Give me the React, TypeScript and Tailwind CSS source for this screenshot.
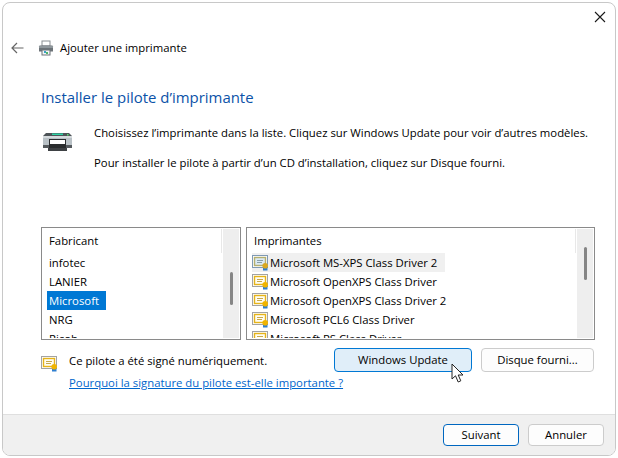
function PrinterSmall() {
  return (
    <svg width="16" height="16" viewBox="0 0 16 16" className="shrink-0">
      <rect x="4" y="1" width="8" height="5" fill="#fff" stroke="#8a8f94" />
      <path d="M1 6.5 Q1 5.5 2 5.5 H14 Q15 5.5 15 6.5 V11.5 H1 Z" fill="#6c7378" />
      <rect x="1" y="6" width="14" height="2" fill="#8f979c" />
      <rect x="4" y="10" width="8" height="5" fill="#f4f6f7" stroke="#6c7378" />
      <rect x="6" y="11" width="2" height="2" fill="#3aa0c8" />
      <rect x="8" y="12" width="2" height="2" fill="#52b66a" />
    </svg>
  );
}
function PrinterBig() {
  return (
    <svg width="29" height="18" viewBox="0 0 29 18" className="shrink-0">
      <path d="M3 0 H26 L29 3 H0 Z" fill="#4d5357" />
      <rect x="9" y="0.5" width="11" height="1.5" fill="#2ed3a6" />
      <rect x="24" y="1" width="1.5" height="1.5" fill="#58e070" />
      <rect x="0" y="3" width="29" height="11" fill="#b9c1c6" />
      <rect x="0" y="3" width="29" height="2" fill="#d5dadd" />
      <rect x="0" y="12" width="29" height="3" fill="#54595d" />
      <rect x="6" y="6" width="17" height="9" fill="#2a2c2e" />
      <rect x="7" y="7" width="15" height="4" fill="#fff" />
      <rect x="5" y="15" width="19" height="3" fill="#3e4144" />
    </svg>
  );
}
function Cert({ selected = false }: { selected?: boolean }) {
  return (
    <svg width="17" height="16" viewBox="0 0 17 16" className="shrink-0">
      <rect x="0.5" y="0.5" width="15" height="12" fill="#fff" stroke={selected ? "#7f9ab5" : "#a3a3a3"} />
      <rect x="2.5" y="2.5" width="11" height="8" fill={selected ? "#dbeaf3" : "#fffdf2"} stroke={selected ? "#b5b070" : "#e5b31a"} strokeWidth="1.4" />
      <rect x="5" y="5" width="6" height="1" fill={selected ? "#8aa0a8" : "#c9a94a"} />
      <rect x="5" y="7" width="5" height="1" fill={selected ? "#8aa0a8" : "#c9a94a"} />
      <rect x="11" y="12" width="4.5" height="3.5" fill="#2f7fd0" />
      <circle cx="13.2" cy="10.8" r="2.8" fill={selected ? "#d9a820" : "#f0b400"} />
    </svg>
  );
}
const makers = ["infotec", "LANIER", "Microsoft", "NRG", "Ricoh"];
const printers = [
  "Microsoft MS-XPS Class Driver 2",
  "Microsoft OpenXPS Class Driver",
  "Microsoft OpenXPS Class Driver 2",
  "Microsoft PCL6 Class Driver",
  "Microsoft PS Class Driver",
];
function Scrollbar({ top }: { top: string }) {
  return (
    <div className="w-[16px] shrink-0 bg-[#eeeeee] flex justify-center">
      <div className={`w-[3px] h-[33px] bg-[#858585] rounded-sm ${top}`} />
    </div>
  );
}
export default function App() {
  return (
    <div className="w-[618px] h-[458px] bg-white p-[2px] overflow-hidden text-[11.33px] leading-[16px] text-black" style={{ fontFamily: '"Open Sans", sans-serif' }}>
      <div className="w-[614px] h-[454px] border border-[#c8c8c8] rounded-[8px] overflow-hidden flex flex-col bg-white">
        <div className="h-[21px] flex justify-end items-start pt-[8px] pr-[9px] shrink-0">
          <svg width="12" height="12" viewBox="0 0 12 12"><path d="M1 1 L11 11 M11 1 L1 11" stroke="#1a1a1a" strokeWidth="1.1" /></svg>
        </div>
        <div className="h-[24px] mt-[12px] flex items-center pl-[8px] shrink-0">
          <svg width="13" height="12" viewBox="0 0 13 12"><path d="M12.5 6 H1 M6 1 L1 6 L6 11" fill="none" stroke="#666" strokeWidth="1.2" /></svg>
          <div className="ml-[14px]"><PrinterSmall /></div>
          <span className="ml-[6px]">Ajouter une imprimante</span>
        </div>
        <h1 className="ml-[38px] mt-[26px] text-[14.95px] leading-[22px] font-normal text-[#0b52a8] shrink-0">Installer le pilote d’imprimante</h1>
        <div className="ml-[40px] mt-[17px] flex shrink-0">
          <div className="mt-[8px]"><PrinterBig /></div>
          <div className="ml-[22px] flex flex-col gap-[14px]">
            <p>Choisissez l’imprimante dans la liste. Cliquez sur Windows Update pour voir d’autres modèles.</p>
            <p>Pour installer le pilote à partir d’un CD d’installation, cliquez sur Disque fourni.</p>
          </div>
        </div>
        <div className="ml-[38px] mt-[56px] flex gap-[5px] shrink-0">
          <div className="w-[200px] h-[113px] border border-[#8a8a8a] flex p-[1px] overflow-hidden">
            <div className="flex-1 min-w-0 overflow-hidden">
              <div className="h-[24px] pl-[6px] flex items-center border-r border-[#e8e8e8] mr-[1px]">Fabricant</div>
              <div className="pl-[4px]">
                {makers.map((m) => (
                  <div key={m} className={`h-[19px] flex items-center px-[2px] w-fit min-w-[59px] ${m === "Microsoft" ? "bg-[#0078d4] text-white" : ""}`}>{m}</div>
                ))}
              </div>
            </div>
            <Scrollbar top="mt-[43px]" />
          </div>
          <div className="w-[349px] h-[113px] border border-[#8a8a8a] flex p-[1px] overflow-hidden">
            <div className="flex-1 min-w-0 overflow-hidden">
              <div className="h-[24px] pl-[6px] flex items-center border-r border-[#e8e8e8] mr-[1px]">Imprimantes</div>
              <div className="pl-[4px]">
                {printers.map((p, i) => (
                  <div key={p} className={`h-[19px] flex items-center w-[193px] ${i === 0 ? "bg-[#f0f0f0]" : ""}`}>
                    <Cert selected={i === 0} />
                    <span className="whitespace-nowrap ml-[1px]">{p}</span>
                  </div>
                ))}
              </div>
            </div>
            <Scrollbar top="mt-[18px]" />
          </div>
        </div>
        <div className="ml-[38px] mt-[8px] flex shrink-0">
          <div className="mt-[8px]"><Cert /></div>
          <div className="ml-[11px] w-[265px] flex flex-col pt-[5px]">
            <span>Ce pilote a été signé numériquement.</span>
            <a className="mt-[6px] text-[#0066cc] underline whitespace-nowrap">Pourquoi la signature du pilote est-elle importante ?</a>
          </div>
          <button className="relative h-[24px] w-[138px] border border-[#0078d4] bg-[#e0eef9] rounded-[4px]">
            Windows Update
            <svg width="14" height="21" viewBox="0 0 14 21" className="absolute left-[116px] top-[14px]">
              <path d="M1 1 V16 L4.5 12.8 L7.2 19 L9.8 17.8 L7.2 12 H12 Z" fill="#fff" stroke="#222" strokeWidth="1" />
            </svg>
          </button>
          <button className="ml-[9px] h-[24px] w-[113px] border border-[#cccccc] bg-[#fdfdfd] rounded-[4px]">Disque fourni...</button>
        </div>
        <div className="mt-auto h-[41px] bg-[#f0f0f0] border-t border-[#dfdfdf] flex justify-end items-start pt-[9px] pr-[11px] gap-[9px] shrink-0">
          <button className="h-[22px] w-[76px] border border-[#0067c0] bg-[#fdfdfd] rounded-[4px]">Suivant</button>
          <button className="h-[22px] w-[76px] border border-[#cccccc] bg-[#fdfdfd] rounded-[4px]">Annuler</button>
        </div>
      </div>
    </div>
  );
}
